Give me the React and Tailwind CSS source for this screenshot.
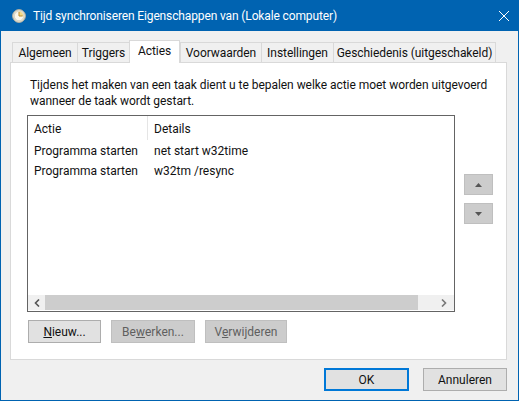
const tabs = [
  { label: "Algemeen", w: "w-[65px]" },
  { label: "Triggers", w: "w-[52px]" },
  { label: "Acties", w: "w-[51px]", active: true },
  { label: "Voorwaarden", w: "w-[81px]" },
  { label: "Instellingen", w: "w-[72px]" },
  { label: "Geschiedenis (uitgeschakeld)", w: "w-[163px]" },
];

function ClockIcon() {
  return (
    <svg width="14" height="14" viewBox="0 0 14 14" className="shrink-0">
      <circle cx="7" cy="7" r="6.4" fill="#e4e1d4" stroke="#b3af9e" />
      <circle cx="7" cy="7" r="4.7" fill="#fbf8ec" stroke="#c9c4ae" strokeWidth="0.6" />
      <path d="M7 7V2.6A4.4 4.4 0 0 1 11.4 7Z" fill="#f3d98a" />
      <path d="M7 3V7H10.6" fill="none" stroke="#b98a2a" strokeWidth="1" />
    </svg>
  );
}

function Tab({ label, w, active }) {
  if (active) {
    return (
      <div className={`${w} h-[23px] -mb-px z-10 bg-white border border-b-0 border-[#d9d9d9] text-center leading-[21px]`}>
        {label}
      </div>
    );
  }
  return (
    <div className={`${w} h-[20px] bg-[#f0f0f0] border border-b-0 border-r-0 last:border-r border-[#d9d9d9] text-center leading-[20px]`}>
      {label}
    </div>
  );
}

function Button({ children, disabled, primary, w }) {
  const look = disabled
    ? "bg-[#cccccc] border-[#bfbfbf] text-[#5f5f5f]"
    : primary
      ? "bg-[#e1e1e1] border-2 border-[#0078d7] text-[#111]"
      : "bg-[#e1e1e1] border-[#adadad] text-[#111]";
  return (
    <div className={`${w} h-[23px] border ${look} flex items-center justify-center leading-none`}>
      {children}
    </div>
  );
}

function Arrow({ dir }) {
  return (
    <div className="w-[29px] h-[21px] bg-[#cccccc] border border-[#bfbfbf] flex items-center justify-center">
      <svg width="7" height="4" viewBox="0 0 7 4">
        <path d={dir === "up" ? "M3.5 0L7 4H0Z" : "M0 0H7L3.5 4Z"} fill="#555" />
      </svg>
    </div>
  );
}

export default function App() {
  return (
    <div
      className="w-[519px] h-[401px] flex flex-col bg-[#f0f0f0] border border-[#0063b1] border-t-0 text-[12px] text-[#111] overflow-hidden"
      style={{ fontFamily: 'Roboto, "Open Sans", sans-serif' }}
    >
      <div className="h-[31px] shrink-0 bg-[#0063b1] text-white flex items-center pl-[11px] pr-[7px] text-[12px]">
        <ClockIcon />
        <span className="ml-[7px] tracking-[-0.13px]">Tijd synchroniseren Eigenschappen van (Lokale computer)</span>
        <svg width="10" height="10" viewBox="0 0 10 10" className="ml-auto mr-[2px]">
          <path d="M0 0L10 10M10 0L0 10" stroke="#fff" strokeWidth="1" />
        </svg>
      </div>

      <div className="flex flex-col pl-[9px] pr-[11px] pt-[9px]">
        <div className="flex items-end pl-[2px] h-[22px] tracking-[-0.06px]">
          {tabs.map((t) => (
            <Tab key={t.label} {...t} />
          ))}
        </div>

        <div className="h-[298px] bg-white border border-[#d9d9d9] pl-[16px] pr-[13px] pt-[14px]">
          <p className="leading-[16px] pl-[3px] whitespace-nowrap tracking-[-0.04px]">
            Tijdens het maken van een taak dient u te bepalen welke actie moet worden uitgevoerd
            <br />
            wanneer de taak wordt gestart.
          </p>

          <div className="flex mt-[6px]">
            <div className="w-[428px] h-[197px] border border-[#646464] flex flex-col shrink-0">
              <div className="flex h-[24px] leading-[26px]">
                <div className="w-[120px] pl-[6px] border-r border-[#e5e5e5]">Actie</div>
                <div className="pl-[6px]">Details</div>
              </div>
              <div className="flex-1 pt-[1px] leading-[20px]">
                <div className="flex">
                  <div className="w-[120px] pl-[6px]">Programma starten</div>
                  <div className="pl-[6px]">net start w32time</div>
                </div>
                <div className="flex">
                  <div className="w-[120px] pl-[6px]">Programma starten</div>
                  <div className="pl-[6px]">w32tm /resync</div>
                </div>
              </div>
              <div className="h-[15px] mb-px bg-[#f0f0f0] flex">
                <div className="w-[17px] flex items-center justify-center">
                  <svg width="6" height="8" viewBox="0 0 6 8">
                    <path d="M5 0.5L1.5 4L5 7.5" fill="none" stroke="#555" strokeWidth="1.6" />
                  </svg>
                </div>
                <div className="w-[373px] bg-[#cdcdcd]" />
                <div className="flex-1 flex items-center justify-end pr-[7px]">
                  <svg width="6" height="8" viewBox="0 0 6 8">
                    <path d="M1 0.5L4.5 4L1 7.5" fill="none" stroke="#777" strokeWidth="1.6" />
                  </svg>
                </div>
              </div>
            </div>
            <div className="flex flex-col gap-[8px] ml-[9px] pt-[59px]">
              <Arrow dir="up" />
              <Arrow dir="down" />
            </div>
          </div>

          <div className="flex gap-[10px] mt-[8px] ml-[1px]">
            <Button w="w-[73px]">
              <span><span className="underline">N</span>ieuw...</span>
            </Button>
            <Button w="w-[84px]" disabled>
              <span>Be<span className="underline">w</span>erken...</span>
            </Button>
            <Button w="w-[82px]" disabled>
              <span>V<span className="underline">e</span>rwijderen</span>
            </Button>
          </div>
        </div>

        <div className="flex justify-end gap-[14px] mt-[8px]">
          <Button w="w-[85px]" primary>OK</Button>
          <Button w="w-[84px]">Annuleren</Button>
        </div>
      </div>
    </div>
  );
}
